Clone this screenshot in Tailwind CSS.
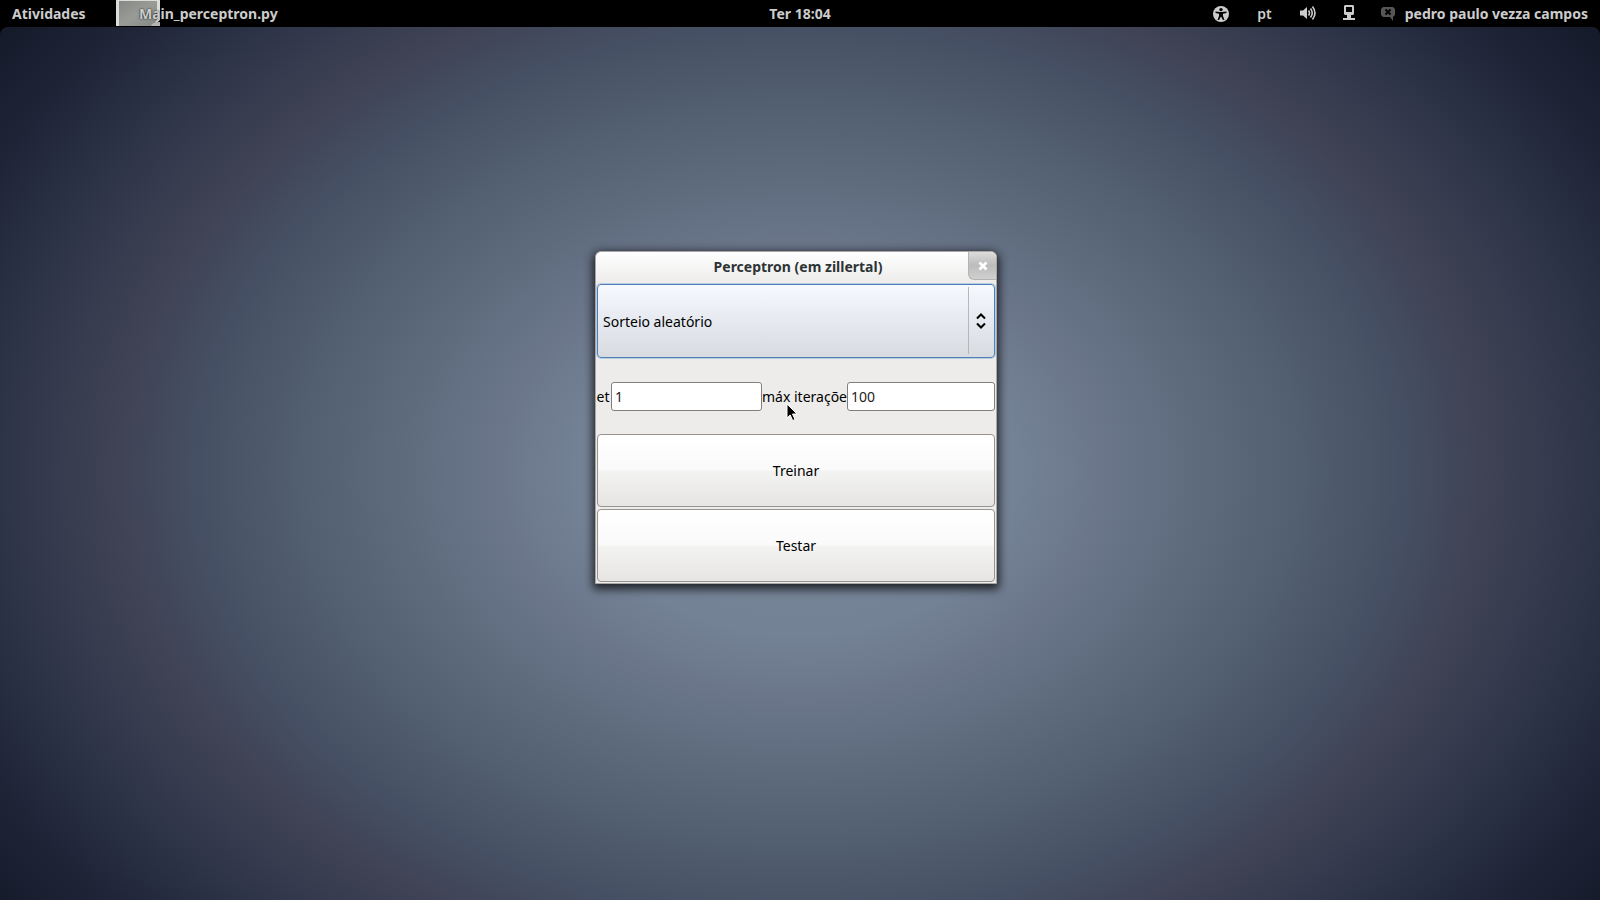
<!DOCTYPE html>
<html lang="pt-BR">
<head>
<meta charset="utf-8">
<title>Perceptron</title>
<script src="https://cdn.jsdelivr.net/npm/@tailwindcss/browser@4"></script>
</head>
<body class="min-h-screen flex flex-col bg-black font-['Noto_Sans',sans-serif] text-sm">
<header class="h-[27px] shrink-0 grid grid-cols-[1fr_auto_1fr] items-center px-3 font-bold text-[#cccccc]">
  <div class="flex items-center h-full">
    <button class="w-[103px] text-left">Atividades</button>
    <button class="flex items-center h-full">
      <svg class="w-[46px] h-[26px] self-start" viewBox="0 0 46 26" aria-hidden="true">
        <defs><linearGradient id="thumb" x1="0" y1="0" x2="1" y2="1"><stop offset="0" stop-color="#858884"/><stop offset=".5" stop-color="#999b97"/><stop offset="1" stop-color="#858884"/></linearGradient></defs>
        <path d="M1 0H45V20L38 26H1Z" fill="#dcddda"/>
        <path d="M4 1H42V20L38 26H4Z" fill="url(#thumb)"/>
        <path d="M36 26Q37 22 45 22V26Z" fill="#b5b6b3"/>
      </svg>
      <span class="-ml-[22px] [text-shadow:0_0_2px_#000]">Main_perceptron.py</span>
    </button>
  </div>
  <time class="text-center">Ter 18:04</time>
  <div class="flex items-center justify-end">
    <button aria-label="Acessibilidade" class="mr-[28px]">
      <svg class="block size-4" viewBox="0 0 16 16"><circle cx="8" cy="8" r="8" fill="#ccc"/><circle cx="8" cy="3.6" r="1.7" fill="#000"/><path d="M2.5 5.5 7 6H9L13.500 5.500V7L10 7.800V10L11.500 14H10L8 10.500 6 14H4.500L6 10V7.800L2.500 7Z" fill="#000"/></svg>
    </button>
    <button class="mr-[28px] font-semibold">pt</button>
    <button aria-label="Volume" class="mr-[27px] pb-0.5">
      <svg class="block size-4" viewBox="0 0 16 16" fill="none" stroke="#ccc" stroke-width="1.600"><path d="M0 5.500H3L7 2V14L3 10.500H0Z" fill="#ccc" stroke="none"/><path d="M8.500 5.500Q10.500 8 8.500 10.500M10.500 3.500Q14 8 10.500 12.500M12.500 1.500Q17.500 8 12.500 14.500"/></svg>
    </button>
    <button aria-label="Rede" class="mr-[26px] pb-0.5">
      <svg class="block w-3 h-4" viewBox="0 0 12 16" fill="#ccc"><path fill-rule="evenodd" d="M2 0H10L11 1V9L10 10H2L1 9V1ZM3 2V7H9V2ZM4 10H8V13H12V15H0V13H4Z"/></svg>
    </button>
    <button class="flex items-center gap-2.5">
      <svg class="block w-3.5 h-4" viewBox="0 0 14 16"><path d="M2 1H12L14 3V9L12 11V15L9 11H2L0 9V3Z" fill="#555"/><path d="M4.500 3.500 9.500 8.500M9.500 3.500 4.500 8.500" stroke="#000" stroke-width="2"/></svg>
      <span>pedro paulo vezza campos</span>
    </button>
  </div>
</header>
<main class="relative grow rounded-t-lg bg-[radial-gradient(62.5%_85%_at_50%_51%,#78869a_0%,#748295_22%,#6b768b_30%,#5e6b7d_40%,#525f70_50%,#465064_60%,#3f4355_68%,#2e3448_80%,#1f2537_90%,#141a29_100%)]">
  <section aria-labelledby="title" class="absolute left-[calc(50%-205px)] top-56 w-[402px] rounded-t-md border border-[#a9a7a4] bg-[#edeceb] shadow-[0_3px_10px_2px_rgba(0,0,0,0.75)]">
    <div class="h-[31px] relative flex items-center justify-center rounded-t-md bg-linear-to-b from-white to-[#edeceb]">
      <h1 id="title" class="pl-1 pb-px font-bold text-[#2e3436]">Perceptron (em zillertal)</h1>
      <button aria-label="Fechar" class="absolute right-0 top-0 w-[28px] h-[28px] flex items-center justify-center rounded-tr-md rounded-bl-md border-l border-b border-[#b4b3b1] bg-linear-to-b from-[#dddcdb] via-[#bcbcbc] to-[#d0d0d0]">
        <svg class="size-2.5" viewBox="0 0 10 10"><path d="M1.500 1.500 8.500 8.500M8.500 1.500 1.500 8.500" stroke="#fff" stroke-width="2.800"/></svg>
      </button>
    </div>
    <div class="grid grid-cols-1 grid-rows-4 h-[300px] px-px">
      <div class="relative pt-px">
        <select aria-label="Modo de treinamento" class="appearance-none size-full rounded border border-[#4f7fb5] pt-0.5 pl-[5px] text-black bg-linear-to-b from-[#f6faff] via-[#e6eaf0] to-[#d8dce1] shadow-[0_0_0_1px_#b9cde3]">
          <option>Sorteio aleatório</option>
        </select>
        <div class="pointer-events-none absolute right-0 inset-y-1 w-[27px] border-l border-[#b9b7b4] flex items-center justify-center">
          <svg class="w-2.5 h-4 mr-0.5" viewBox="0 0 10 16" fill="none" stroke="#000" stroke-width="2"><path d="M1 5.500 5 1.500 9 5.500M1 10.500 5 14.500 9 10.500"/></svg>
        </div>
      </div>
      <div class="flex items-center pt-0.5">
        <label for="set" class="w-[14px] shrink-0 -ml-px flex justify-center overflow-hidden mr-px">et</label>
        <input id="set" value="1" class="h-[29px] w-[151px] shrink-0 rounded-[3px] border border-[#82807d] bg-white px-[3px] text-[#1d1d1d]">
        <label for="iter" class="w-[85px] shrink-0 text-center overflow-hidden whitespace-nowrap">máx iteraçõe</label>
        <input id="iter" value="100" class="h-[29px] min-w-0 flex-1 rounded-[3px] border border-[#82807d] bg-white px-[3px] text-[#1d1d1d]">
      </div>
      <button class="my-px rounded border border-[#969390] bg-[linear-gradient(#fff,#fafafa_49%,#f3f3f2_51%,#e6e5e4)]">Treinar</button>
      <button class="my-px rounded border border-[#969390] bg-[linear-gradient(#fff,#fafafa_49%,#f3f3f2_51%,#e6e5e4)]">Testar</button>
    </div>
  </section>
  <svg class="absolute left-[calc(50%-14px)] top-[376px] w-3 h-[19px]" viewBox="0 0 12 19" aria-hidden="true"><path d="M1 1V15L4.200 12 6.700 17.500 9 16.500 6.500 11H11Z" fill="#000" stroke="#fff" stroke-width="1"/></svg>
</main>
</body>
</html>
